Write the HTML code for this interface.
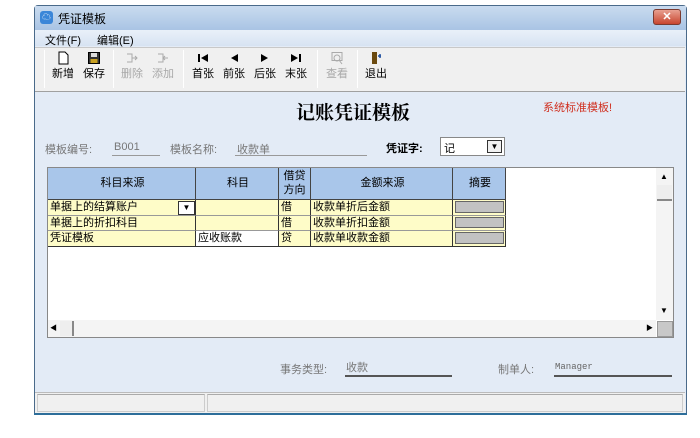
<!DOCTYPE html>
<html><head><meta charset="utf-8"><style>
*{margin:0;padding:0;box-sizing:border-box}
body{width:700px;height:438px;background:#fff;position:relative;font-family:"Liberation Sans","Noto Sans CJK SC",sans-serif;font-size:11px;color:#000;overflow:hidden}
.a{position:absolute}
.win{left:34px;top:5px;width:653px;height:409px;background:#e3ebf6;border:1px solid #4a6a8a;border-radius:4px 4px 0 0}
.btn{position:absolute;top:51px;width:30px;text-align:center;font-size:11px;line-height:13px}
.btn svg{display:block;margin:0 auto 3px;width:14px;height:14px}
.dis{color:#a8a8a8}
.sep{position:absolute;top:50px;width:1px;height:38px;background:#aaa;border-right:1px solid #fff}
.cell{position:absolute;border-right:1px solid #333;border-bottom:1px solid #999;white-space:nowrap;overflow:hidden;font-size:11px;line-height:14px;padding-left:2px}
.hd{background:#a9c6ea;border-right:1px solid #444;border-bottom:1px solid #444;text-align:center;font-size:11px}
.y{background:#fefcc8}
.g{background:#c2c2c2;border:1px solid #666}
.lbl{color:#777;font-size:11px}
</style></head><body>
<div class="a win"></div>
<div class="a" style="left:35px;top:6px;width:651px;height:24px;background:linear-gradient(#c9dbef,#a9c4e4)"></div>
<div class="a" style="left:40px;top:11px;width:13px;height:13px;background:#3b86d8;border-radius:3px;color:#fff;font-size:9px;line-height:13px;text-align:center">☁</div>
<div class="a" style="left:58px;top:10px;font-size:12px">凭证模板</div>
<div class="a" style="left:653px;top:9px;width:28px;height:16px;background:linear-gradient(#e8a090,#c8452e);border:1px solid #7a3a30;border-radius:3px;color:#fff;text-align:center;font-size:11px;line-height:14px;font-weight:bold">✕</div>
<div class="a" style="left:35px;top:30px;width:651px;height:16px;background:linear-gradient(#e9f0f9,#d7e3f2)"></div>
<div class="a" style="left:45px;top:32px;font-size:11px">文件(F)</div>
<div class="a" style="left:97px;top:32px;font-size:11px">编辑(E)</div>
<div class="a" style="left:35px;top:47px;width:650px;height:45px;background:#f0f0f0;border-top:1px solid #c8c8c8;border-bottom:1px solid #a0a0a0"></div>
<div class="sep" style="left:44px"></div>
<div class="btn" style="left:48px"><svg viewBox="0 0 14 14"><path d="M3 1h6l3 3v9H3z" fill="#fff" stroke="#000"/></svg>新增</div>
<div class="btn" style="left:79px"><svg viewBox="0 0 14 14"><rect x="1.5" y="1.5" width="11" height="11" fill="#333" stroke="#000"/><rect x="4" y="2" width="6" height="4" fill="#ddd"/><rect x="3.5" y="8" width="7" height="4" fill="#c8a020"/></svg>保存</div>
<div class="sep" style="left:113px"></div>
<div class="btn dis" style="left:117px"><svg viewBox="0 0 14 14" stroke="#aaa" fill="none"><path d="M2 3h5v8H2M7 7h5M10 5l2 2-2 2"/></svg>删除</div>
<div class="btn dis" style="left:148px"><svg viewBox="0 0 14 14" stroke="#aaa" fill="none"><path d="M2 3h5v8H2M7 7h5M9 5l-2 2 2 2"/></svg>添加</div>
<div class="sep" style="left:183px"></div>
<div class="btn" style="left:188px"><svg viewBox="0 0 14 14"><rect x="2" y="3" width="2" height="8"/><path d="M12 3v8L5 7z"/></svg>首张</div>
<div class="btn" style="left:219px"><svg viewBox="0 0 14 14"><path d="M11 3v8L4 7z"/></svg>前张</div>
<div class="btn" style="left:250px"><svg viewBox="0 0 14 14"><path d="M3 3v8l7-4z"/></svg>后张</div>
<div class="btn" style="left:281px"><svg viewBox="0 0 14 14"><path d="M2 3v8l7-4z"/><rect x="10" y="3" width="2" height="8"/></svg>末张</div>
<div class="sep" style="left:317px"></div>
<div class="btn dis" style="left:322px"><svg viewBox="0 0 14 14" stroke="#aaa" fill="none"><rect x="2" y="1.5" width="10" height="8"/><circle cx="7" cy="7" r="3"/><path d="M9 9l3 4"/></svg>查看</div>
<div class="sep" style="left:357px"></div>
<div class="btn" style="left:361px"><svg viewBox="0 0 14 14"><rect x="3" y="1" width="5" height="12" fill="#6b4a10"/><path d="M9 5h3M11 3v4" stroke="#2050a0" stroke-width="1.5"/></svg>退出</div>
<div class="a" style="left:296px;top:98px;font-size:19px;font-weight:bold;font-family:'Noto Serif CJK SC',serif">记账凭证模板</div>
<div class="a" style="left:543px;top:99px;font-size:11px;color:#d03020">系统标准模板!</div>
<div class="a lbl" style="left:45px;top:141px">模板编号:</div>
<div class="a lbl" style="left:114px;top:141px">B001</div>
<div class="a" style="left:112px;top:155px;width:48px;height:1px;background:#999"></div>
<div class="a lbl" style="left:170px;top:141px">模板名称:</div>
<div class="a lbl" style="left:237px;top:141px">收款单</div>
<div class="a" style="left:235px;top:155px;width:132px;height:1px;background:#999"></div>
<div class="a" style="left:386px;top:140px;font-size:11px;font-weight:bold">凭证字:</div>
<div class="a" style="left:440px;top:137px;width:65px;height:19px;background:#fff;border:1px solid #888"></div>
<div class="a" style="left:444px;top:140px">记</div>
<div class="a" style="left:487px;top:140px;width:15px;height:13px;border:1px solid #333;background:#f0f0f0;font-size:8px;text-align:center;line-height:12px">▼</div>
<div class="a" style="left:47px;top:167px;width:627px;height:171px;background:#fff;border:1px solid #888"></div>
<div class="cell hd" style="left:48px;top:168px;width:148px;height:32px;line-height:31px">科目来源</div>
<div class="cell hd" style="left:196px;top:168px;width:83px;height:32px;line-height:31px">科目</div>
<div class="cell hd" style="left:279px;top:168px;width:32px;height:32px;line-height:14px;padding:1px 0 0">借贷<br>方向</div>
<div class="cell hd" style="left:311px;top:168px;width:142px;height:32px;line-height:31px">金额来源</div>
<div class="cell hd" style="left:453px;top:168px;width:53px;height:32px;line-height:31px">摘要</div>
<div class="cell y" style="left:48px;top:200px;width:148px;height:16px">单据上的结算账户</div>
<div class="a" style="left:178px;top:201px;width:17px;height:14px;background:#fff;border:1px solid #333;font-size:8px;text-align:center;line-height:12px">▼</div>
<div class="cell y" style="left:196px;top:200px;width:83px;height:16px"></div>
<div class="cell y" style="left:279px;top:200px;width:32px;height:16px">借</div>
<div class="cell y" style="left:311px;top:200px;width:142px;height:16px">收款单折后金额</div>
<div class="cell y" style="left:453px;top:200px;width:53px;height:16px"><div class="g" style="margin:1px 1px 0 0;height:12px"></div></div>
<div class="cell y" style="left:48px;top:216px;width:148px;height:15px">单据上的折扣科目</div>
<div class="cell y" style="left:196px;top:216px;width:83px;height:15px"></div>
<div class="cell y" style="left:279px;top:216px;width:32px;height:15px">借</div>
<div class="cell y" style="left:311px;top:216px;width:142px;height:15px">收款单折扣金额</div>
<div class="cell y" style="left:453px;top:216px;width:53px;height:15px"><div class="g" style="margin:1px 1px 0 0;height:11px"></div></div>
<div class="cell y" style="left:48px;top:231px;width:148px;height:16px;border-bottom:1px solid #333">凭证模板</div>
<div class="cell" style="left:196px;top:231px;width:83px;height:16px;background:#fff;border-bottom:1px solid #333">应收账款</div>
<div class="cell y" style="left:279px;top:231px;width:32px;height:16px;border-bottom:1px solid #333">贷</div>
<div class="cell y" style="left:311px;top:231px;width:142px;height:16px;border-bottom:1px solid #333">收款单收款金额</div>
<div class="cell y" style="left:453px;top:231px;width:53px;height:16px;border-bottom:1px solid #333"><div class="g" style="margin:1px 1px 0 0;height:12px"></div></div>
<div class="a" style="left:656px;top:168px;width:17px;height:152px;background:#f4f4f4"></div>
<div class="a" style="left:656px;top:170px;width:16px;height:14px;font-size:8px;text-align:center;line-height:14px">▲</div>
<div class="a" style="left:657px;top:185px;width:15px;height:16px;background:#eee;border-bottom:2px solid #888"></div>
<div class="a" style="left:656px;top:304px;width:16px;height:14px;font-size:8px;text-align:center;line-height:14px">▼</div>
<div class="a" style="left:48px;top:320px;width:608px;height:17px;background:#f4f4f4"></div>
<div class="a" style="left:50px;top:322px;width:10px;height:13px;font-size:7px;line-height:13px">◀</div>
<div class="a" style="left:60px;top:321px;width:14px;height:15px;background:#eee;border-right:2px solid #888"></div>
<div class="a" style="left:646px;top:322px;width:10px;height:13px;font-size:7px;line-height:13px">▶</div>
<div class="a" style="left:657px;top:321px;width:16px;height:16px;background:#c8c8c8;border:1px solid #999"></div>
<div class="a lbl" style="left:280px;top:361px">事务类型:</div>
<div class="a lbl" style="left:346px;top:359px">收款</div>
<div class="a" style="left:345px;top:375px;width:107px;height:2px;background:#555"></div>
<div class="a lbl" style="left:498px;top:361px">制单人:</div>
<div class="a" style="left:555px;top:362px;font-size:9px;color:#666;font-family:'Liberation Mono',monospace">Manager</div>
<div class="a" style="left:554px;top:375px;width:118px;height:2px;background:#555"></div>
<div class="a" style="left:35px;top:392px;width:650px;height:21px;background:#f0f0f0;border-top:1px solid #bbb"></div>
<div class="a" style="left:37px;top:394px;width:168px;height:18px;border:1px solid #ccc;border-top-color:#aaa"></div>
<div class="a" style="left:207px;top:394px;width:476px;height:18px;border:1px solid #ccc;border-top-color:#aaa"></div>
<div class="a" style="left:34px;top:413px;width:653px;height:2px;background:#2d6e9a"></div>
</body></html>
